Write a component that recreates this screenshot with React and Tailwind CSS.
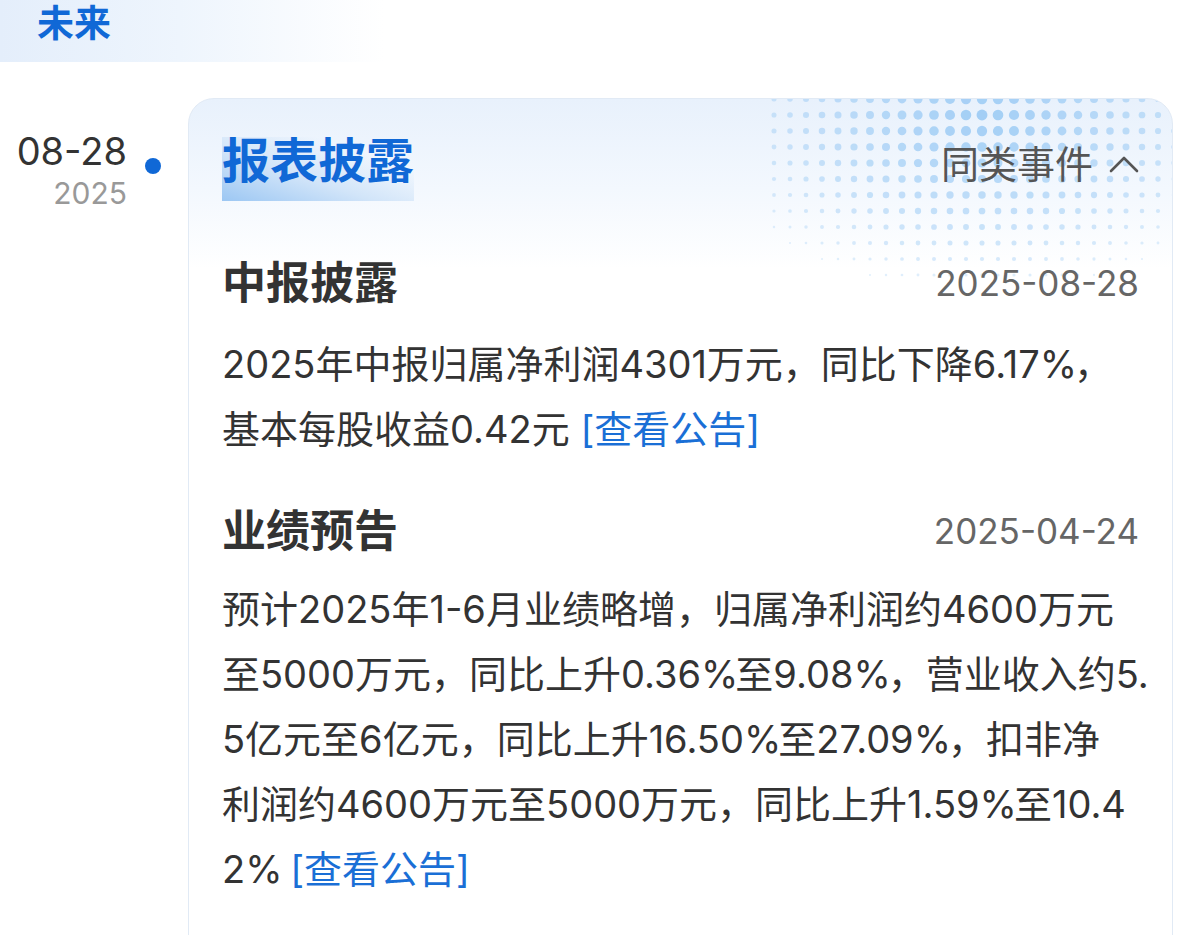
import React from "react";

function Dots() {
  const dots = [];
  for (let cx = 761 - 16 * 11; cx <= 990; cx += 16) {
    for (let cy = 0; cy <= 190; cy += 16) {
      const dx = (cx - 795) / 290;
      const dy = (cy - 14) / 180;
      const d = Math.sqrt(dx * dx + dy * dy);
      if (d < 1) {
        const k = 1 - d;
        const r = 4.6 * Math.pow(k, 0.8) + 0.9;
        const o = 0.3 + 0.7 * k;
        dots.push(<circle key={cx + "-" + cy} cx={cx} cy={cy} r={r} fill="#a2cef5" fillOpacity={o} />);
      }
    }
  }
  return (
    <svg className="absolute left-0 top-0 pointer-events-none" width="990" height="200" viewBox="0 0 990 200">
      {dots}
    </svg>
  );
}

function Chevron() {
  return (
    <svg width="30" height="20" viewBox="0 0 30 20" className="ml-[16px]">
      <path d="M2 17 L15 4 L28 17" fill="none" stroke="#555" strokeWidth="2.6" strokeLinecap="round" strokeLinejoin="round" />
    </svg>
  );
}

const Link = () => <span className="text-[#1a6fd6]">[查看公告]</span>;
const P = () => <span className="tracking-[-3px]">%</span>;

export default function App() {
  return (
    <div
      className="w-[1200px] h-[935px] overflow-hidden bg-white"
      style={{ fontFamily: 'Inter, "Noto Sans CJK SC", "Noto Sans", sans-serif' }}
    >
      <div className="h-[62px] bg-[linear-gradient(to_right,#e4eefb,#eef5fd_15%,#ffffff_32%)] flex items-center pl-[37px] pb-[16px]">
        <span className="text-[37px] font-bold text-[#1068d6] leading-none">未来</span>
      </div>

      <div className="flex mt-[36px]">
        <div className="w-[188px] shrink-0 flex">
          <div className="w-[127px] text-right pt-[34px]">
            <div className="text-[38px] leading-[38px] text-[#333]">08-28</div>
            <div className="text-[30px] leading-[30px] text-[#999] mt-[8px]">2025</div>
          </div>
          <div className="w-[16px] h-[16px] rounded-full bg-[#1068d6] ml-[18px] mt-[60px]"></div>
        </div>

        <div className="relative w-[985px] shrink-0 h-[900px] rounded-t-[26px] border border-[#e1eaf5] overflow-hidden bg-[linear-gradient(to_bottom,#e8f1fc,#f3f8fe_90px,#ffffff_170px)]">
          <Dots />
          <div className="relative px-[33px] pt-[38px]">
            <div className="flex items-start justify-between h-[64px]">
              <span className="inline-block text-[48px] leading-[48px] pt-[0px] pb-[16px] font-bold text-[#1068d6] bg-[linear-gradient(to_top_right,#9cc7f3,#d2e5f9_40%,rgba(255,255,255,0)_75%)]">
                报表披露
              </span>
              <div className="flex items-center pt-[1px] text-[38px] leading-[52px] text-[#555]">
                同类事件
                <Chevron />
              </div>
            </div>

            <div className="flex items-center justify-between mt-[60px] h-[44px]">
              <span className="text-[44px] leading-[44px] font-bold text-[#333]">中报披露</span>
              <span className="text-[35px] leading-[44px] text-[#666]">2025-08-28</span>
            </div>
            <div className="mt-[27px] text-[38px] leading-[65px] text-[#333] whitespace-nowrap">
              <div>2025年中报归属净利润4301万元，同比下降6.17<P />，</div>
              <div>
                基本每股收益0.42元 <Link />
              </div>
            </div>

            <div className="flex items-center justify-between mt-[47px] h-[44px]">
              <span className="text-[44px] leading-[44px] font-bold text-[#333]">业绩预告</span>
              <span className="text-[35px] leading-[44px] text-[#666]">2025-04-24</span>
            </div>
            <div className="mt-[24px] text-[38px] leading-[65px] text-[#333] whitespace-nowrap">
              <div>预计2025年1-6月业绩略增，归属净利润约4600万元</div>
              <div>至5000万元，同比上升0.36<P />至9.08<P />，营业收入约5.</div>
              <div>5亿元至6亿元，同比上升16.50<P />至27.09<P />，扣非净</div>
              <div>利润约4600万元至5000万元，同比上升1.59<P />至10.4</div>
              <div>
                2<P /> <Link />
              </div>
            </div>
          </div>
        </div>
      </div>
    </div>
  );
}
